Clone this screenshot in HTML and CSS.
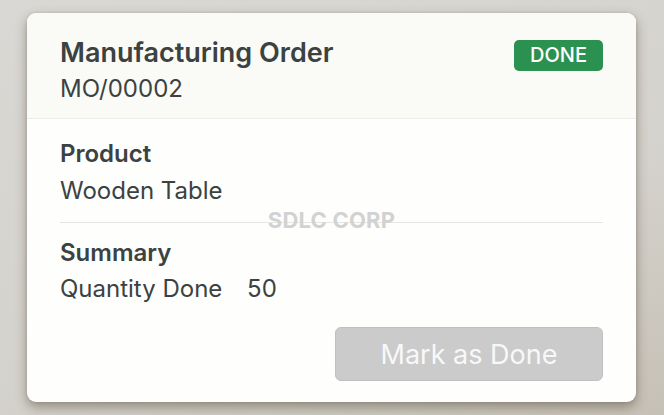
FILE: index.html
```html
<!DOCTYPE html>
<html lang="en">
<head>
<meta charset="UTF-8" />
<meta name="viewport" content="width=device-width, initial-scale=1" />
<title>Manufacturing Order</title>
<link rel="stylesheet" href="styles.css">
</head>
<body>
  <div class="card">
    <div class="card-header">
      <div class="titles">
        <h1>Manufacturing Order</h1>
        <div class="ref">MO/00002</div>
      </div>
      <span class="badge">DONE</span>
    </div>
    <div class="card-body">
      <div class="section">
        <h2>Product</h2>
        <div class="value">Wooden Table</div>
      </div>
      <div class="section">
        <h2>Summary</h2>
        <div class="value">Quantity Done <span class="qty">50</span></div>
      </div>
      <div class="actions">
        <button type="button" disabled>Mark as Done</button>
      </div>
      <div class="watermark">SDLC CORP</div>
    </div>
  </div>
</body>
</html>
```

FILE: styles.css
```css
html, body {
  height: 100%;
}
body {
  font-family: Inter, "Noto Sans", sans-serif;
  background: linear-gradient(160deg, #d9d8d4 0%, #d4d2cc 60%, #c6c1b6 100%);
  margin: 0;
  padding: 13px 28px 13px 27px;
  box-sizing: border-box;
  color: #3b4241;
}
.card {
  background: #fefefd;
  border-radius: 9px;
  box-shadow: 0 5px 12px rgba(70,60,45,0.45), 0 0 3px rgba(0,0,0,0.12);
  overflow: hidden;
  height: 389px;
  display: flex;
  flex-direction: column;
}
.card-header {
  background: #fafaf6;
  border-bottom: 1px solid #ebebe7;
  padding: 24px 33px 0 33px;
  display: flex;
  justify-content: space-between;
  align-items: flex-start;
  height: 106px;
  box-sizing: border-box;
}
h1 {
  margin: 0;
  font-size: 27px;
  font-weight: 600;
  line-height: 32px;
}
.ref {
  font-size: 24px;
  line-height: 30px;
  margin-top: 5px;
}
.badge {
  margin-top: 3px;
  background: #2a9151;
  color: #fff;
  font-size: 20px;
  font-weight: 500;
  padding: 4px 16px;
  border-radius: 5px;
  line-height: 23px;
}
.card-body {
  position: relative;
  padding: 17px 33px 0 33px;
  flex: 1;
}
.section {
  padding-bottom: 13px;
}
.section + .section {
  border-top: 1px solid #e6e6e3;
  padding-top: 12px;
  padding-bottom: 0;
}
h2 {
  margin: 0;
  font-size: 24px;
  font-weight: 600;
  line-height: 36px;
}
.value {
  font-size: 24px;
  line-height: 36px;
  margin-top: 1px;
}
.section + .section .value {
  margin-top: 0;
}
.qty {
  margin-left: 18px;
}
.actions {
  display: flex;
  justify-content: flex-end;
  margin-top: 20px;
}
button {
  width: 268px;
  height: 54px;
  background: #cbcbcb;
  border: 1px solid #c0c0c0;
  border-radius: 6px;
  color: #f8f8f8;
  font-family: inherit;
  font-size: 27px;
}
.watermark {
  position: absolute;
  left: 0;
  right: 0;
  top: 88px;
  line-height: 26px;
  text-align: center;
  font-size: 22px;
  font-weight: 700;
  color: #d2d2d2;
  letter-spacing: 0.2px;
}
```
